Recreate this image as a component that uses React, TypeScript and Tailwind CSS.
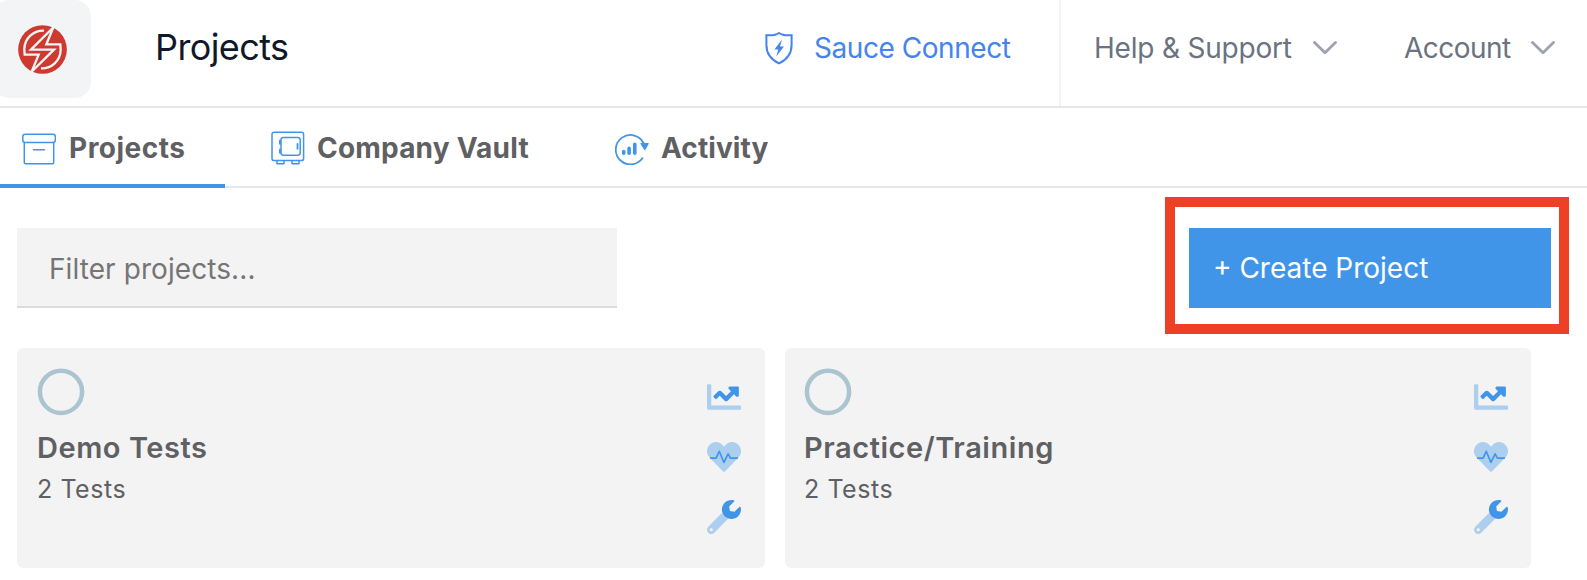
import React from "react";

function Logo() {
  return (
    <svg className="block h-[49px] w-[49px]" viewBox="0 0 147 147" fill="none">
      <circle cx="73.5" cy="73.5" r="73" fill="#cd3a30" />
      <g stroke="#f3f4f6" strokeWidth="7" strokeLinejoin="miter">
        <path d="M78 17C46 16 20 40 19 72L20 89H62L41 140" />
        <path d="M69 130C101 131 127 107 128 75L127 58H85L106 7" />
        <path d="M107 6L39 74H108L40 141" />
      </g>
    </svg>
  );
}

function ShieldIcon() {
  return (
    <svg className="block h-[34px] w-7" viewBox="0 0 28 34" fill="none">
      <path d="M14 2C11 4.2 6 4.6 1.4 4.2V14C1.4 23 6 28.600 14 32.400C22 28.600 26.600 23 26.600 14V4.200C22 4.600 17 4.200 14 2Z" stroke="#4583f0" strokeWidth="2" />
      <path d="M17 8.500L9.400 18.500H13.400L11.200 25.500L19 15.500H15Z" fill="#4583f0" />
    </svg>
  );
}

function Chevron() {
  return (
    <svg className="block h-[14px] w-6" viewBox="0 0 24 14" fill="none">
      <path d="M1.500 1.500L12 11.800L22.500 1.500" stroke="#9ca3af" strokeWidth="2.800" strokeLinecap="round" strokeLinejoin="round" />
    </svg>
  );
}

function BoxIcon() {
  return (
    <svg className="block h-8 w-[34px]" viewBox="0 0 34 32" fill="none" stroke="#4195e9" strokeWidth="1.500">
      <rect x="0.800" y="1.200" width="32.600" height="8.200" rx="2.400" />
      <path d="M2.300 9.400V29.600Q2.300 30.800 3.500 30.800H30.500Q31.700 30.800 31.700 29.600V9.400" />
      <path d="M11.500 16.800H22.500" strokeLinecap="round" />
    </svg>
  );
}

function VaultIcon() {
  return (
    <svg className="block h-[34px] w-[34px]" viewBox="0 0 34 34" fill="none" stroke="#4195e9" strokeWidth="1.500">
      <rect x="1" y="1.200" width="31.600" height="28.400" rx="2.200" />
      <rect x="10" y="6.600" width="19.200" height="17.600" rx="2.400" />
      <path d="M9 9.500V12.800M9 18.500V21.800" strokeWidth="2" strokeLinecap="round" />
      <path d="M26.500 13V17.800" strokeLinecap="round" strokeWidth="1.800" />
      <path d="M6 29.800V32.800H13V29.800M21 29.800V32.800H28V29.800" strokeLinejoin="round" />
    </svg>
  );
}

function ActivityIcon() {
  return (
    <svg className="block h-8 w-[34px]" viewBox="0 0 34 32" fill="none" stroke="#4195e9">
      <path d="M27.400 25.300A14.700 14.700 0 1 1 28.800 10.500" strokeWidth="1.800" strokeLinecap="round" />
      <path d="M26 10.500H33.200L29.800 16.600Z" fill="#4195e9" strokeWidth="1.200" strokeLinejoin="round" />
      <path d="M8.700 18.500V20.200M14.100 15.200V20.200M19.800 11.400V20.200" strokeWidth="3.600" strokeLinecap="round" />
    </svg>
  );
}

function StatusRing() {
  return (
    <svg className="block size-12" viewBox="0 0 48 48" fill="none">
      <circle cx="24" cy="23.800" r="21.100" stroke="#abc4cf" strokeWidth="4.500" />
    </svg>
  );
}

function ChartIcon() {
  return (
    <svg className="block h-[34px] w-[34px]" viewBox="0 0 512 512" fill="#4195e9">
      <path opacity="0.400" d="M496 384H64V80c0-8.840-7.160-16-16-16H16C7.160 64 0 71.160 0 80v336c0 17.670 14.330 32 32 32h464c8.840 0 16-7.160 16-16v-32c0-8.840-7.160-16-16-16z" />
      <path d="M464 96H345.940c-21.380 0-32.090 25.850-16.970 40.970l32.400 32.400L288 242.750l-73.370-73.370c-12.500-12.500-32.760-12.500-45.250 0l-68.690 68.690c-6.250 6.250-6.250 16.380 0 22.630l22.620 22.620c6.250 6.250 16.380 6.250 22.630 0L192 237.250l73.370 73.370c12.500 12.500 32.760 12.500 45.250 0l96-96 32.400 32.400c15.120 15.120 40.970 4.410 40.970-16.970V112c.01-8.840-7.150-16-15.990-16z" />
    </svg>
  );
}

function HeartIcon() {
  return (
    <svg className="block h-[34px] w-[34px]" viewBox="0 0 512 512" fill="none">
      <path fill="#4195e9" opacity="0.400" d="M473.700 73.900l-2.400-2.500c-51.500-52.600-135.800-52.600-187.400 0L256 100l-27.900-28.500c-51.500-52.700-135.900-52.700-187.400 0l-2.400 2.400C-10.400 123.700-12.500 203 31 256L243.100 474.500c7.100 7.300 18.600 7.300 25.700 0L481 256c43.500-53 41.400-132.300-7.300-182.100z" />
      <path d="M46 273H137L185 170L255 338L318 210L352 273H466" stroke="#4195e9" strokeWidth="25" strokeLinejoin="round" />
    </svg>
  );
}

function WrenchIcon() {
  return (
    <svg className="block h-[34px] w-[34px]" viewBox="0 0 512 512" fill="#4195e9">
      <path opacity="0.400" fillRule="evenodd" d="M232 189L18.740 402.760c-24.990 24.990-24.990 65.510 0 90.500 24.990 24.990 65.510 24.990 90.500 0L322.450 280.050C275 266 245 236 232 189zM64 472c-13.250 0-24-10.750-24-24 0-13.260 10.750-24 24-24s24 10.740 24 24c0 13.250-10.750 24-24 24z" />
      <path d="M507.730 109.100c-2.240-9.030-13.540-12.090-20.120-5.510l-74.360 74.360-67.880-11.310-11.310-67.880 74.360-74.360c6.620-6.620 3.430-17.900-5.660-20.160-47.380-11.740-99.550.910-136.580 37.930-39.640 39.640-50.550 97.100-34.050 147.200C245 236 275 266 322.450 280.050c50.120 16.710 107.470 5.680 147.370-34.220 37.070-37.070 49.700-89.320 37.910-136.730z" />
    </svg>
  );
}

function ProjectCard({ title, count, size }: { title: string; count: string; size: string }) {
  return (
    <article className={`flex h-[220px] justify-between rounded-md bg-[#f3f3f3] pt-5 ${size}`}>
      <div>
        <StatusRing />
        <h2 className="mt-[14px] text-[29px] leading-9 font-semibold tracking-[0.55px]">{title}</h2>
        <p className="mt-[7px] text-[25px] leading-8 tracking-[0.55px]">{count}</p>
      </div>
      <div className="flex flex-col gap-[26px] pt-3">
        <ChartIcon />
        <HeartIcon />
        <WrenchIcon />
      </div>
    </article>
  );
}

export default function App() {
  return (
    <div className="h-[580px] w-[1587px] overflow-hidden bg-white font-['Inter',sans-serif] text-[#5f6063]">
      <header className="flex h-[108px] border-b-2 border-[#e5e7eb]">
        <div className="-ml-[7px] flex h-[98px] w-[98px] shrink-0 items-center justify-center rounded-2xl bg-[#f3f4f6]">
          <Logo />
        </div>
        <h1 className="ml-16 pt-[27px] text-[36px] leading-10 tracking-[-0.6px] text-[#111827]">Projects</h1>
        <div className="ml-auto flex w-[294px] shrink-0 pt-[30px] text-[28px] leading-9 tracking-[-0.45px] text-[#4583f0]">
          <div className="pt-px"><ShieldIcon /></div>
          <span className="ml-[21px] whitespace-nowrap">Sauce Connect</span>
        </div>
        <nav className="flex w-[528px] shrink-0 border-l-2 border-[#f3f4f6] pt-[30px] pl-[33px] text-[28px] leading-9 text-[#6b7280]">
          <div className="flex w-[310px]">
            <span className="w-[217px] tracking-[-0.2px] whitespace-nowrap">Help &amp; Support</span>
            <div className="pt-[11px] pl-[2px]"><Chevron /></div>
          </div>
          <div className="flex">
            <span className="w-[125px] tracking-[-0.55px] whitespace-nowrap">Account</span>
            <div className="pt-[11px] pl-[2px]"><Chevron /></div>
          </div>
        </nav>
      </header>

      <nav className="flex h-20 border-b-2 border-[#e5e7eb] text-[28px] leading-9 font-bold">
        <div className="flex h-20 w-[225px] shrink-0 border-b-4 border-[#4195e9] pt-[22px] pl-[22px]">
          <div className="pt-[3px]"><BoxIcon /></div>
          <span className="ml-[13px] tracking-[0.5px]">Projects</span>
        </div>
        <div className="flex w-[344px] shrink-0 pt-[22px] pl-[46px]">
          <div className="pt-px"><VaultIcon /></div>
          <span className="ml-3 tracking-[0.2px] whitespace-nowrap">Company Vault</span>
        </div>
        <div className="flex shrink-0 pt-[22px] pl-[46px]">
          <div className="pt-[3px]"><ActivityIcon /></div>
          <span className="ml-3 tracking-[0.1px]">Activity</span>
        </div>
      </nav>

      <main>
        <div className="flex items-start justify-between pt-[9px] pr-[18px] pl-[17px]">
          <input
            className="mt-[31px] block h-20 w-[600px] border-b-2 border-[#dcdcdc] bg-[#f3f3f3] px-8 pt-[3px] text-[28px] tracking-[0.08px] placeholder:text-[#757575]"
            placeholder="Filter projects..."
          />
          <div className="h-[137px] w-[404px] border-[10px] border-[#ec4125] pt-[21px] pl-[14px]">
            <button className="block h-20 w-[362px] bg-[#4195e9] pl-6 text-left text-[28px] text-white">
              + Create Project
            </button>
          </div>
        </div>
        <div className="mt-[14px] flex gap-5 pl-[17px]">
          <ProjectCard title="Demo Tests" count="2 Tests" size="w-[748px] pr-6 pl-5" />
          <ProjectCard title="Practice/Training" count="2 Tests" size="w-[746px] pr-[23px] pl-[19px]" />
        </div>
      </main>
    </div>
  );
}
